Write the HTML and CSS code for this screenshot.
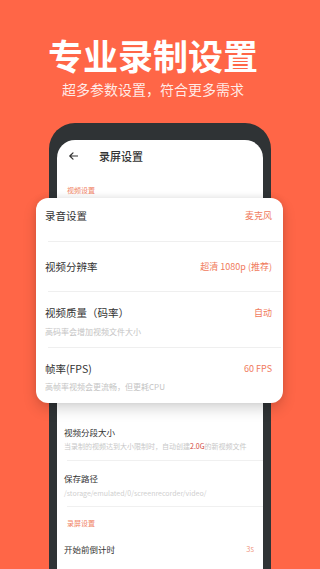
FILE: index.html
```html
<!DOCTYPE html>
<html lang="zh-CN">
<head>
<meta charset="utf-8">
<title>专业录制设置</title>
<link rel="stylesheet" href="styles.css">
</head>
<body>
<div class="page">
  <header class="hero">
    <h1 class="hero-title">专业录制设置</h1>
    <p class="hero-sub">超多参数设置，符合更多需求</p>
  </header>
  <div class="phone">
    <div class="screen">
      <div class="topbar">
        <svg class="back" width="9" height="8" viewBox="0 0 9 8"><path d="M8.5 4H1M4 0.8L0.8 4L4 7.2" fill="none" stroke="#333" stroke-width="1.2" stroke-linecap="round" stroke-linejoin="round"/></svg>
        <span class="topbar-title">录屏设置</span>
      </div>
      <div class="section-label first">视频设置</div>
      <div class="card">
        <div class="crow r1">
          <div class="ctext"><div class="ctitle">录音设置</div></div>
          <div class="cval">麦克风</div>
        </div>
        <div class="cdiv"></div>
        <div class="crow r2">
          <div class="ctext"><div class="ctitle">视频分辨率</div></div>
          <div class="cval">超清 1080p (推荐)</div>
        </div>
        <div class="cdiv"></div>
        <div class="crow r3">
          <div class="ctext"><div class="ctitle">视频质量（码率）</div><div class="csub">高码率会增加视频文件大小</div></div>
          <div class="cval">自动</div>
        </div>
        <div class="cdiv"></div>
        <div class="crow r4">
          <div class="ctext"><div class="ctitle">帧率(FPS)</div><div class="csub">高帧率视频会更流畅，但更耗CPU</div></div>
          <div class="cval">60 FPS</div>
        </div>
      </div>
      <div class="srow s1">
        <div class="stitle">视频分段大小</div>
        <div class="ssub">当录制的视频达到大小限制时，自动创建<span class="hl">2.0G</span>的新视频文件</div>
      </div>
      <div class="sdiv"></div>
      <div class="srow s2">
        <div class="stitle">保存路径</div>
        <div class="ssub path">/storage/emulated/0/screenrecorder/video/</div>
      </div>
      <div class="sdiv"></div>
      <div class="section-label second">录屏设置</div>
      <div class="srow s3">
        <div class="stitle">开始前倒计时</div>
        <div class="sval">3s</div>
      </div>
    </div>
  </div>
</div>
</body>
</html>
```
FILE: styles.css
```css
* { box-sizing: border-box; }
html, body { margin: 0; padding: 0; }
body {
  background: #ff6647;
  font-family: "Noto Sans CJK SC", "Noto Sans", sans-serif;
  width: 320px;
  height: 569px;
  overflow: hidden;
}
.page { display: flex; flex-direction: column; }
.hero {
  padding: 35px 14px 0 0;
  text-align: center;
  color: #fff;
}
.hero-title {
  margin: 0;
  font-size: 35px;
  line-height: 40px;
  font-weight: 700;
  letter-spacing: 0;
}
.hero-sub {
  margin: 5px 0 0;
  font-size: 14px;
  line-height: 18px;
  color: rgba(255,255,255,0.88);
}
.phone {
  margin: 25px auto 0;
  width: 222px;
  background: #2f3335;
  border-radius: 26px 26px 0 0;
  padding: 17px 8px 0;
  height: 460px;
}
.screen {
  background: #fff;
  border-radius: 18px 18px 0 0;
  height: 100%;
  display: flex;
  flex-direction: column;
}
.topbar {
  height: 32px;
  display: flex;
  align-items: center;
  padding-left: 12px;
  gap: 21px;
}
.back { display: block; }
.topbar-title {
  font-size: 11px;
  line-height: 14px;
  color: #333;
  font-weight: 500;
}
.section-label {
  font-size: 7px;
  line-height: 10px;
  color: #f08466;
  padding-left: 10px;
}
.section-label.first { padding-top: 13px; }
.section-label.second { padding-top: 11px; }
.card {
  margin: 3px -20px 0 -21px;
  background: #fff;
  border-radius: 12px;
  box-shadow: 0 6px 14px rgba(0,0,0,0.16), 0 -1px 6px rgba(0,0,0,0.08);
  display: flex;
  flex-direction: column;
  position: relative;
  z-index: 1;
}
.crow {
  display: flex;
  justify-content: space-between;
  align-items: flex-start;
  padding: 0 11px 0 9px;
}
.r1 { padding-top: 11px; padding-bottom: 18px; }
.r2 { padding-top: 18px; padding-bottom: 17px; }
.r3 { padding-top: 14px; padding-bottom: 10px; }
.r4 { padding-top: 14px; padding-bottom: 11px; }
.ctext { display: flex; flex-direction: column; }
.r3 .ctext { gap: 7px; }
.r4 .ctext { gap: 6px; }
.ctitle {
  font-size: 10.5px;
  line-height: 14px;
  color: #333;
}
.csub {
  font-size: 8px;
  line-height: 10px;
  color: #c4c4c4;
}
.cval {
  font-size: 9px;
  line-height: 14px;
  color: #f07a5c;
}
.cdiv {
  height: 1px;
  background: #efefef;
  margin: 0 2px 0 12px;
}
.srow {
  display: flex;
  flex-direction: column;
  padding: 0 9px 0 7px;
}
.s1 { padding-top: 23px; padding-bottom: 9px; gap: 3px; }
.s2 { padding-top: 11px; padding-bottom: 8px; gap: 4px; }
.s3 {
  padding-top: 15px;
  flex-direction: row;
  justify-content: space-between;
  align-items: center;
}
.stitle {
  font-size: 8.5px;
  line-height: 12px;
  color: #333;
}
.ssub {
  font-size: 7px;
  line-height: 10px;
  color: #c8c8c8;
  white-space: nowrap;
}
.ssub.path { color: #cfcfcf; }
.hl { color: #d2453a; }
.sval {
  font-size: 7.5px;
  line-height: 12px;
  color: #f09a85;
}
.sdiv {
  height: 1px;
  background: #f0f0f0;
  margin-left: 10px;
}
```
